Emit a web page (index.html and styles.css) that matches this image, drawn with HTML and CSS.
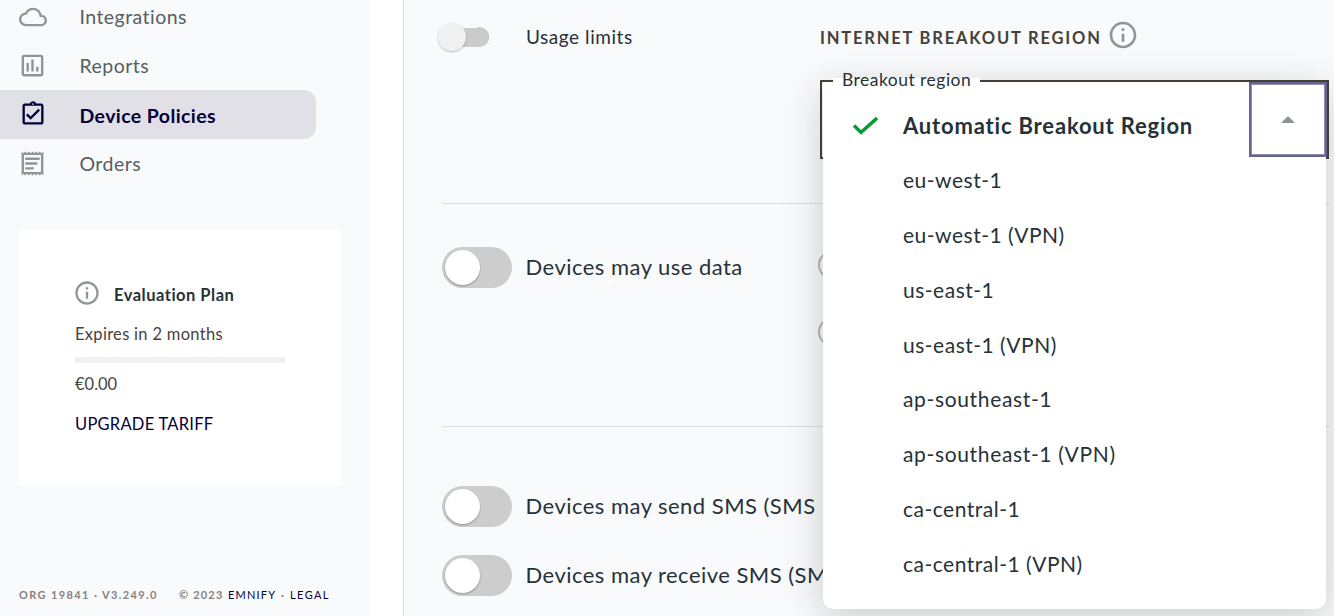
FILE: index.html
```html
<!DOCTYPE html>
<html lang="en">
<head>
<meta charset="utf-8">
<title>Device Policies</title>
<link rel="stylesheet" href="styles.css">
</head>
<body>
<div class="app">
  <aside class="sidebar">
    <nav class="nav">
      <a class="nav-item"><svg class="nav-icon" viewBox="0 0 24 24"><path d="M19.35 10.04C18.67 6.59 15.64 4 12 4 9.11 4 6.6 5.64 5.35 8.04 2.34 8.36 0 10.91 0 14c0 3.31 2.69 6 6 6h13c2.76 0 5-2.24 5-5 0-2.64-2.05-4.78-4.65-4.96zM19 18H6c-2.21 0-4-1.79-4-4 0-2.05 1.53-3.76 3.56-3.97l1.07-.11.5-.95C8.08 7.14 9.94 6 12 6c2.62 0 4.88 1.86 5.39 4.43l.3 1.5 1.53.11c1.56.1 2.78 1.41 2.78 2.96 0 1.65-1.35 3-3 3z"/></svg><span class="nav-label">Integrations</span></a>
      <a class="nav-item"><svg class="nav-icon large" viewBox="0 0 24 24"><path d="M9 17H7v-7h2v7zm4 0h-2V7h2v10zm4 0h-2v-4h2v4zm2 2H5V5h14v14zm0-16H5c-1.100 0-2 .9-2 2v14c0 1.100.9 2 2 2h14c1.100 0 2-.9 2-2V5c0-1.100-.9-2-2-2z"/></svg><span class="nav-label">Reports</span></a>
      <a class="nav-item active"><svg class="nav-icon" viewBox="0 0 24 24"><path d="M19 3h-4.180C14.400 1.840 13.300 1 12 1s-2.400.840-2.820 2H5c-1.100 0-2 .9-2 2v14c0 1.100.9 2 2 2h14c1.100 0 2-.9 2-2V5c0-1.100-.9-2-2-2zm-7-.25c.41 0 .75.34.75.75s-.34.75-.75.75-.75-.34-.75-.75.34-.75.75-.75zM19 19H5V5h14v14zM17.990 9l-1.410-1.420-6.590 6.590-2.580-2.570-1.420 1.410 4 3.990z"/></svg><span class="nav-label">Device Policies</span></a>
      <a class="nav-item"><svg class="nav-icon large" viewBox="0 0 24 24"><path d="M19.500 3.500L18 2l-1.500 1.500L15 2l-1.500 1.500L12 2l-1.500 1.500L9 2 7.500 3.500 6 2 4.500 3.500 3 2v20l1.500-1.500L6 22l1.500-1.500L9 22l1.500-1.500L12 22l1.500-1.500L15 22l1.500-1.500L18 22l1.500-1.500L21 22V2l-1.500 1.500zM19 19.090H5V4.910h14v14.180zM6 15h7v2H6zm0-4h10v2H6zm0-4h12v2H6z"/></svg><span class="nav-label">Orders</span></a>
    </nav>
    <section class="plan">
      <div class="plan-head"><svg class="plan-icon" viewBox="0 0 24 24"><path d="M11 7h2v2h-2zm0 4h2v6h-2zm1-9C6.480 2 2 6.480 2 12s4.480 10 10 10 10-4.480 10-10S17.520 2 12 2zm0 18c-4.410 0-8-3.590-8-8s3.590-8 8-8 8 3.590 8 8-3.590 8-8 8z"/></svg><strong class="plan-name">Evaluation Plan</strong></div>
      <p class="plan-expiry">Expires in 2 months</p>
      <div class="plan-bar"></div>
      <p class="plan-cost">€0.00</p>
      <a class="plan-upgrade">UPGRADE TARIFF</a>
    </section>
    <footer class="footer"><span class="version">ORG 19841 · V3.249.0</span><span class="copyright">© 2023</span><a class="emnify">EMNIFY</a><span class="dot">·</span><a class="legal">LEGAL</a></footer>
  </aside>
  <main class="main">
    <section class="limits">
      <div class="usage"><span class="switch-small"></span><span class="usage-label">Usage limits</span></div>
      <div class="region">
        <div class="region-head"><h2 class="region-title">INTERNET BREAKOUT REGION</h2><svg class="region-icon" viewBox="0 0 24 24"><path d="M11 7h2v2h-2zm0 4h2v6h-2zm1-9C6.480 2 2 6.480 2 12s4.480 10 10 10 10-4.480 10-10S17.520 2 12 2zm0 18c-4.410 0-8-3.590-8-8s3.590-8 8-8 8 3.590 8 8-3.590 8-8 8z"/></svg></div>
        <div class="select">
          <ul class="menu">
            <li class="option selected"><svg class="check" viewBox="0 0 26 20"><path d="M2 9.500l7 7L25 2"/></svg><span class="option-text">Automatic Breakout Region</span></li>
            <li class="option">eu-west-1</li>
            <li class="option">eu-west-1 (VPN)</li>
            <li class="option">us-east-1</li>
            <li class="option">us-east-1 (VPN)</li>
            <li class="option wide">ap-southeast-1</li>
            <li class="option wide">ap-southeast-1 (VPN)</li>
            <li class="option">ca-central-1</li>
            <li class="option">ca-central-1 (VPN)</li>
          </ul>
          <span class="select-label">Breakout region</span>
          <button class="select-toggle" aria-label="Close"><svg class="caret" viewBox="0 0 14 7"><path d="M0 7L7 0l7 7z"/></svg></button>
        </div>
      </div>
    </section>
    <section class="data">
      <div class="row"><span class="switch"></span><span class="row-label">Devices may use data</span></div>
      <div class="radios"><span class="radio"></span><span class="radio"></span></div>
    </section>
    <section class="sms">
      <div class="row"><span class="switch"></span><span class="row-label">Devices may send SMS (SMS</span></div>
      <div class="row"><span class="switch"></span><span class="row-label">Devices may receive SMS (SMS</span></div>
    </section>
  </main>
</div>
</body>
</html>
```
FILE: styles.css
```css
* { box-sizing: border-box; }
body { margin: 0; background: #fff; font-family: Lato, sans-serif; color: #263238; }
p, h2, ul { margin: 0; padding: 0; }
.app { display: flex; width: 1334px; height: 616px; overflow: hidden; }

.sidebar { display: flex; flex-direction: column; width: 369px; flex: none; background: #f9fafc; }
.nav { margin-top: -8px; }
.nav-item { display: flex; align-items: center; width: 316px; height: 49px; padding-left: 18px; border-radius: 0 12px 12px 0; color: #56605f; font-size: 19.500px; }
.nav-icon { width: 28px; height: 28px; margin: 0 17px 0 1px; fill: #8f9696; }
.nav-icon.large { width: 29px; height: 29px; margin: 0 16px 1px 0; }
.nav-label { margin-left: 15.500px; letter-spacing: .45px; white-space: nowrap; }
.nav-icon.large + .nav-label { margin-left: 16.500px; }
.nav-item.active { background: #e0e0e6; color: #04003b; font-weight: 700; }
.nav-item.active .nav-icon { margin-bottom: 1px; fill: #04003b; }
.nav-item.active .nav-label { padding-top: 2px; letter-spacing: .4px; }

.plan { display: flex; flex-direction: column; width: 322px; height: 255px; margin: 42px 0 0 19px; padding: 49px 56px 0; background: #fff; color: #474340; font-size: 16.500px; line-height: 20px; }
.plan-head { display: flex; align-items: center; gap: 13px; height: 28px; }
.plan-icon { width: 28px; height: 28px; margin-left: -2px; fill: #8f9696; }
.plan-name { padding-top: 3px; color: #263238; letter-spacing: .5px; }
.plan-expiry { margin-top: 17px; letter-spacing: .3px; }
.plan-bar { height: 6px; margin-top: 13px; background: #f1f1f1; }
.plan-cost { margin-top: 11px; }
.plan-upgrade { margin-top: 20px; color: #04003b; letter-spacing: .25px; }

.footer { display: flex; margin: auto 0 14px 19px; font-size: 11px; line-height: 14px; font-weight: 700; letter-spacing: 1.200px; color: #86827e; white-space: nowrap; }
.version { width: 160px; letter-spacing: 1.380px; }
.copyright { width: 49px; }
.emnify { width: 53px; color: #04003b; font-weight: 400; }
.dot { width: 9px; }
.legal { color: #04003b; font-weight: 400; letter-spacing: 1.400px; }

.main { flex: 1; min-width: 0; margin-left: 34px; padding: 0 5px 0 38px; border-left: 1px solid #dcdddf; background: #f9fafc; }
.limits, .data { display: grid; grid-template-columns: 378px 1fr; border-bottom: 1px solid #dcdddf; }
.limits { height: 204px; }
.usage { display: flex; align-items: center; height: 74px; margin-left: -4px; }
.switch-small { width: 51px; height: 28px; display: flex; align-items: center; background: radial-gradient(circle at 41.500px 14px, #cbcbcb 9.500px, transparent 10px), linear-gradient(#cbcbcb, #cbcbcb) 14px 4.500px / 28px 19px no-repeat; }
.switch-small::before { content: ""; width: 28px; height: 28px; border-radius: 50%; background: #f0f0f0; box-shadow: 0 1px 2px rgba(0,0,0,.25); }
.usage-label { margin-left: 37px; padding-bottom: 1px; font-size: 19px; letter-spacing: .55px; }
.region-head { display: flex; align-items: center; height: 72px; }
.region-title { padding-top: 3px; font-size: 16.500px; letter-spacing: 1.820px; color: #474039; font-weight: 700; white-space: nowrap; }
.region-icon { width: 32px; height: 32px; margin: -2px 0 0 5px; fill: #8f9696; }
.select { position: relative; width: 509px; height: 79px; margin-top: 8px; border: 2px solid #474039; }
.menu { position: absolute; left: 1px; top: 0; width: 503px; height: 527px; padding-top: 15px; list-style: none; background: #fff; border-radius: 0 0 10px 10px; box-shadow: 0 8px 40px rgba(30,30,30,.22); font-size: 21px; }
.option { display: flex; align-items: center; height: 54.900px; padding-left: 80px; letter-spacing: .5px; white-space: nowrap; }
.option.wide { letter-spacing: .65px; }
.option.selected { padding-left: 29px; font-size: 22px; font-weight: 700; letter-spacing: .82px; }
.option-text { padding-top: 2px; }
.check { width: 26px; height: 20px; margin: 3px 25px 0 0; fill: none; stroke: #009b2e; stroke-width: 3.400; }
.select-label { position: absolute; left: 11px; top: -13px; width: 147px; padding-left: 9px; font-size: 17.500px; line-height: 22px; letter-spacing: .47px; background: linear-gradient(#fff, #fff) 0 9px / 100% 13px no-repeat; white-space: nowrap; }
.select-toggle { position: absolute; right: 0; top: 0; width: 78px; height: 75px; padding: 0; border: 2px solid #65658c; box-shadow: inset 0 0 0 1px #8f8faf; border-radius: 0; background: #fff; display: flex; align-items: center; justify-content: center; }
.caret { width: 14px; height: 7px; fill: #8f9493; }

.data { height: 223px; padding-top: 43px; }
.row { display: flex; align-items: center; gap: 13.500px; height: 41px; }
.switch { display: flex; align-items: center; flex: none; width: 70px; height: 41px; padding-left: 3px; border-radius: 21px; background: #cdcdcd; }
.switch::before { content: ""; width: 35px; height: 35px; border-radius: 50%; background: #fff; box-shadow: 0 1px 2px rgba(0,0,0,.3); }
.row-label { padding-bottom: 3px; font-size: 22px; letter-spacing: .47px; white-space: nowrap; }
.radios { display: flex; flex-direction: column; gap: 39px; margin: 4px 0 0 -2px; }
.radio { width: 28px; height: 28px; border: 2px solid #b5b5b5; border-radius: 50%; }
.sms { display: flex; flex-direction: column; gap: 28px; padding-top: 59px; }
```
